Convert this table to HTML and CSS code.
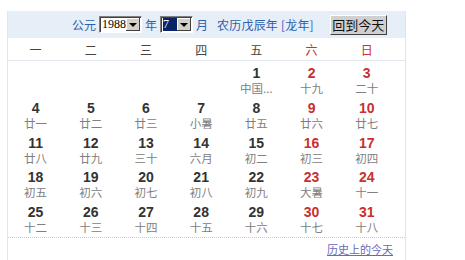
FILE: index.html
```html
<!DOCTYPE html>
<html>
<head>
<meta charset="utf-8">
<link rel="stylesheet" href="styles.css">
</head>
<body>
<div class="cal">
  <div class="head">
    <span class="lbl">公元</span>
    <span class="sel year"><span class="val">1988</span><span class="arrow"></span></span>
    <span class="lbl">年</span>
    <span class="sel month"><span class="val"><span class="hl">7</span></span><span class="arrow"></span></span>
    <span class="lbl">月</span>
    <span class="lunar">农历戊辰年 [龙年]</span>
    <span class="btn">回到今天</span>
  </div>
  <div class="week">
    <span>一</span><span>二</span><span>三</span><span>四</span><span>五</span><span class="red">六</span><span class="red">日</span>
  </div>
  <div class="days">
    <div class="d"></div><div class="d"></div><div class="d"></div><div class="d"></div>
    <div class="d"><b>1</b><i>中国...</i></div>
    <div class="d red"><b>2</b><i>十九</i></div>
    <div class="d red"><b>3</b><i>二十</i></div>
    <div class="d"><b>4</b><i>廿一</i></div>
    <div class="d"><b>5</b><i>廿二</i></div>
    <div class="d"><b>6</b><i>廿三</i></div>
    <div class="d"><b>7</b><i>小暑</i></div>
    <div class="d"><b>8</b><i>廿五</i></div>
    <div class="d red"><b>9</b><i>廿六</i></div>
    <div class="d red"><b>10</b><i>廿七</i></div>
    <div class="d"><b>11</b><i>廿八</i></div>
    <div class="d"><b>12</b><i>廿九</i></div>
    <div class="d"><b>13</b><i>三十</i></div>
    <div class="d"><b>14</b><i>六月</i></div>
    <div class="d"><b>15</b><i>初二</i></div>
    <div class="d red"><b>16</b><i>初三</i></div>
    <div class="d red"><b>17</b><i>初四</i></div>
    <div class="d"><b>18</b><i>初五</i></div>
    <div class="d"><b>19</b><i>初六</i></div>
    <div class="d"><b>20</b><i>初七</i></div>
    <div class="d"><b>21</b><i>初八</i></div>
    <div class="d"><b>22</b><i>初九</i></div>
    <div class="d red"><b>23</b><i>大暑</i></div>
    <div class="d red"><b>24</b><i>十一</i></div>
    <div class="d"><b>25</b><i>十二</i></div>
    <div class="d"><b>26</b><i>十三</i></div>
    <div class="d"><b>27</b><i>十四</i></div>
    <div class="d"><b>28</b><i>十五</i></div>
    <div class="d"><b>29</b><i>十六</i></div>
    <div class="d red"><b>30</b><i>十七</i></div>
    <div class="d red"><b>31</b><i>十八</i></div>
  </div>
  <div class="foot"><a class="hist">历史上的今天</a></div>
</div>
</body>
</html>
```
FILE: styles.css
```css
html, body { margin: 0; padding: 0; background: #fff; }
body { font-family: "Noto Sans CJK SC", "Liberation Sans", sans-serif; }
.cal {
  margin: 11px 0 0 7px;
  width: 397px;
  height: 260px;
  border-left: 1px solid #dde6f0;
  border-right: 1px solid #dde6f0;
}
.head {
  height: 27px;
  background: #e6eef8;
  display: flex;
  align-items: center;
  padding-left: 64px;
  font-size: 12px;
  color: #2e5fae;
}
.lbl { margin: 0 3px; line-height: 14px; }
.lbl:first-child { margin-left: 0; }
.sel {
  display: flex;
  height: 17px;
  box-sizing: border-box;
  border: 1px solid;
  border-color: #808080 #fff #fff #808080;
  background: #fff;
  box-shadow: inset 1px 1px 0 #404040;
}
.year { width: 43px; }
.month { width: 33px; }
.val {
  flex: 1;
  font-family: "Liberation Serif", serif;
  font-size: 12px;
  color: #000;
  line-height: 15px;
  padding-left: 2px;
}
.hl {
  display: inline-block;
  background: #0a246a;
  color: #fff;
  width: 14px;
  height: 13px;
  line-height: 13px;
  margin-top: 1px;
}
.arrow {
  width: 14px;
  margin: 1px 1px 1px 0;
  background: #d4d0c8;
  border-right: 1px solid #404040;
  border-bottom: 1px solid #404040;
  box-shadow: inset 1px 1px 0 #fff;
  position: relative;
  box-sizing: border-box;
}
.arrow::after {
  content: "";
  position: absolute;
  left: 3px;
  top: 5px;
  border-left: 4px solid transparent;
  border-right: 4px solid transparent;
  border-top: 4px solid #000;
}
.lunar { margin-left: 6px; letter-spacing: 0.2px; }
.btn {
  margin-left: 16px;
  width: 57px;
  height: 20px;
  box-sizing: border-box;
  background: #d0d0d0;
  border: 1px solid;
  border-color: #fff #404040 #404040 #fff;
  color: #111;
  font-size: 13px;
  line-height: 18px;
  text-align: center;
}
.week {
  display: grid;
  grid-template-columns: repeat(7, 55.2px);
  height: 22px;
  align-items: center;
  border-bottom: 1px solid #e3e8ee;
  font-size: 12px;
  color: #444;
  text-align: center;
}
.week .red { color: #c8312e; }
.days {
  display: grid;
  grid-template-columns: repeat(7, 55.2px);
  grid-auto-rows: 34.75px;
  margin-top: 1px;
}
.d {
  display: flex;
  flex-direction: column;
  align-items: center;
  padding-top: 4px;
  box-sizing: border-box;
}
.d b {
  font-family: "Liberation Sans", Arial, sans-serif;
  font-weight: bold;
  font-size: 14px;
  line-height: 15px;
  color: #333;
}
.d.red b { color: #c8312e; }
.d i {
  font-style: normal;
  font-size: 11.5px;
  line-height: 15px;
  color: #808080;
}
.foot {
  margin-top: 1px;
  border-top: 1px dotted #c8cdd4;
  padding: 3px 12px 0 0;
  text-align: right;
  font-size: 11px;
}
.hist {
  color: #6a6ab8;
  text-decoration: underline;
}
```
